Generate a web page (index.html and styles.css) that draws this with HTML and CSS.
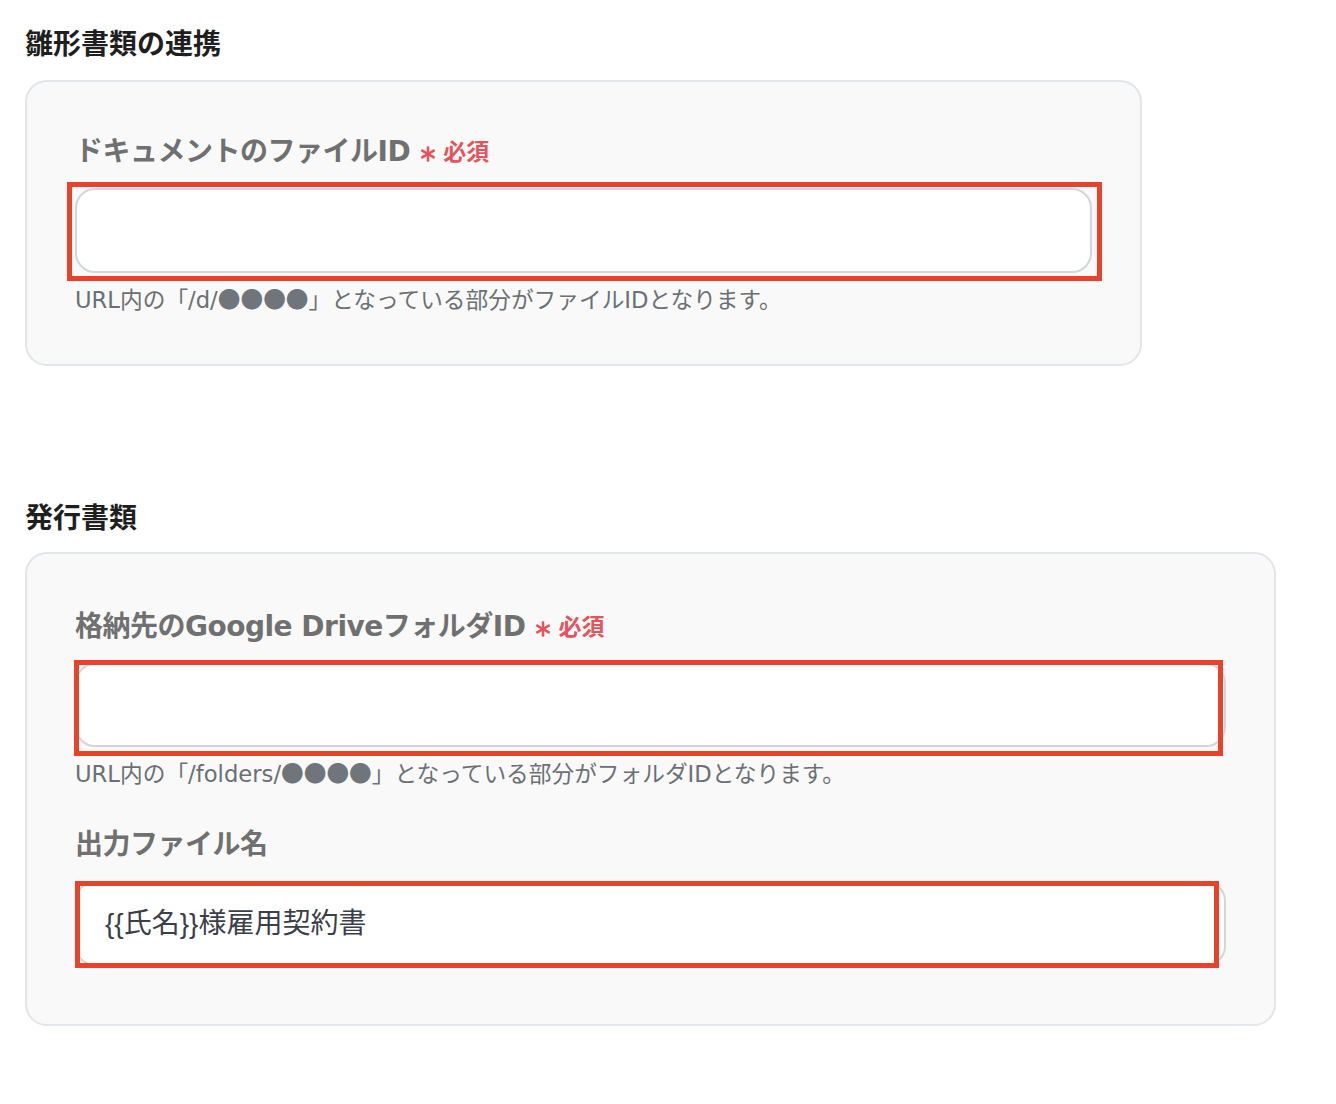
FILE: index.html
```html
<!DOCTYPE html>
<html lang="ja">
<head>
<meta charset="utf-8">
<title>雛形書類の連携</title>
<link rel="stylesheet" href="styles.css">
</head>
<body>
  <section class="section">
    <h2 class="section-title">雛形書類の連携</h2>
    <div class="card card-narrow">
      <div class="field">
        <div class="label">
          <span class="label-text">ドキュメントのファイルID</span>
          <svg class="req-star" viewBox="0 0 20 20" width="18" height="18" aria-hidden="true">
            <g stroke="currentColor" stroke-width="2.8" stroke-linecap="butt">
              <line x1="10" y1="1.5" x2="10" y2="18.5"/>
              <line x1="2.6" y1="5.75" x2="17.4" y2="14.25"/>
              <line x1="2.6" y1="14.25" x2="17.4" y2="5.75"/>
            </g>
          </svg>
          <span class="req-text">必須</span>
        </div>
        <div class="input-wrap">
          <div class="input"></div>
          <span class="highlight hl-1"></span>
        </div>
        <p class="hint">URL内の「/d/<span class="dots">●●●●</span>」となっている部分がファイルIDとなります。</p>
      </div>
    </div>
  </section>

  <section class="section section-second">
    <h2 class="section-title">発行書類</h2>
    <div class="card card-wide">
      <div class="field">
        <div class="label">
          <span class="label-text">格納先のGoogle DriveフォルダID</span>
          <svg class="req-star" viewBox="0 0 20 20" width="18" height="18" aria-hidden="true">
            <g stroke="currentColor" stroke-width="2.8" stroke-linecap="butt">
              <line x1="10" y1="1.5" x2="10" y2="18.5"/>
              <line x1="2.6" y1="5.75" x2="17.4" y2="14.25"/>
              <line x1="2.6" y1="14.25" x2="17.4" y2="5.75"/>
            </g>
          </svg>
          <span class="req-text">必須</span>
        </div>
        <div class="input-wrap">
          <div class="input input-short"></div>
          <span class="highlight hl-2"></span>
        </div>
        <p class="hint">URL内の「/folders/<span class="dots">●●●●</span>」となっている部分がフォルダIDとなります。</p>
      </div>
      <div class="field field-next">
        <div class="label">
          <span class="label-text">出力ファイル名</span>
        </div>
        <div class="input-wrap">
          <div class="input input-tall"><span class="input-value">{{氏名}}様雇用契約書</span></div>
          <span class="highlight hl-3"></span>
        </div>
      </div>
    </div>
  </section>
</body>
</html>
```

FILE: styles.css
```css
* {
  box-sizing: border-box;
}

html, body {
  margin: 0;
  padding: 0;
  background: #ffffff;
}

body {
  padding: 22px 25px 0 25px;
  font-family: "Noto Sans CJK JP", "Noto Sans", sans-serif;
  color: #222222;
}

.section-title {
  margin: 0 0 18px 0;
  font-size: 28px;
  line-height: 40px;
  font-weight: 700;
  color: #1f1f1f;
}

.section-second {
  margin-top: 130px;
}

.section-second .section-title {
  margin-bottom: 16px;
}

.card {
  background: #f9f9f9;
  border: 2px solid #e2e5e9;
  border-radius: 22px;
  padding: 47px 48px 49px 48px;
}

.card-narrow {
  width: 1117px;
}

.card-wide {
  width: 1251px;
  padding-top: 50px;
  padding-bottom: 58px;
}

.field-next {
  margin-top: 33px;
}

.label {
  display: flex;
  align-items: center;
  height: 40px;
  padding-top: 6px;
  margin-bottom: 19px;
}

.label-text {
  font-family: "DejaVu Sans", "Noto Sans CJK JP", sans-serif;
  font-size: 28px;
  line-height: 40px;
  font-weight: 700;
  letter-spacing: -0.5px;
  color: #707070;
}

.req-star {
  color: #e5535c;
  margin-left: 9px;
  margin-top: 3px;
  flex: none;
}

.req-text {
  margin-left: 6px;
  font-size: 23px;
  line-height: 40px;
  font-weight: 700;
  color: #e5535c;
  margin-top: -4px;
}

.input-wrap {
  position: relative;
}

.input {
  height: 85px;
  background: #ffffff;
  border: 2px solid #d2d6dc;
  border-radius: 20px;
  display: flex;
  align-items: center;
  padding: 0 28px;
}

.input-short {
  height: 84px;
}

.input-value {
  font-family: "Liberation Sans", "Noto Sans CJK JP", sans-serif;
  font-size: 28px;
  color: #3b4048;
  line-height: 1;
}

.highlight {
  position: absolute;
  border: 5px solid #e8432a;
  pointer-events: none;
}

.hl-1 {
  top: -6px;
  left: -8px;
  right: -10px;
  bottom: -8px;
}

.hl-2 {
  top: -3px;
  left: -1px;
  right: 3px;
  bottom: -9px;
}

.hl-3 {
  top: 0;
  left: 0;
  right: 7px;
  bottom: -2px;
}

.hint {
  margin: 11px 0 0 0;
  font-family: "DejaVu Sans", "Noto Sans CJK JP", sans-serif;
  font-size: 22.7px;
  line-height: 30px;
  color: #6b7075;
}

.dots {
  font-family: "Noto Sans CJK JP", sans-serif;
  color: #70757c;
}
```
